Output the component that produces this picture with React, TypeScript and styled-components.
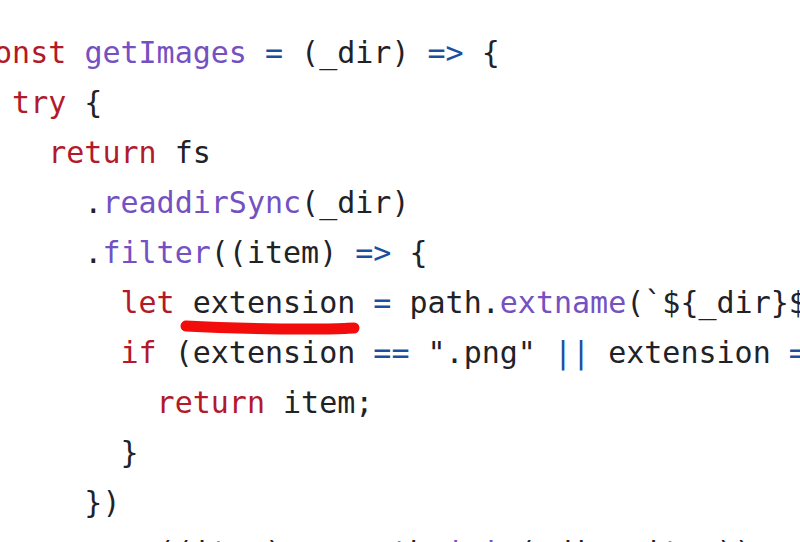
import React from "react";
import styled, { createGlobalStyle } from "styled-components";

const Global = createGlobalStyle`
  html, body { margin: 0; padding: 0; background: #ffffff; }
  body { width: 800px; height: 542px; overflow: hidden; }
`;

const Viewport = styled.div`
  width: 800px;
  height: 542px;
  overflow: hidden;
  background: #ffffff;
`;

const Code = styled.pre`
  margin: 0 0 0 -24px;
  padding: 28px 0 0 0;
  font-family: "DejaVu Sans Mono", "Liberation Mono", monospace;
  font-size: 30px;
  line-height: 50px;
  color: #1f2328;
  white-space: pre;
`;

const Line = styled.div<{ $indent: number }>`
  display: block;
  padding-left: ${(p) => p.$indent * 18.06}px;
  height: 50px;
  white-space: pre;
`;

const Kw = styled.span`
  color: #b21a2b;
`;

const Fn = styled.span`
  color: #7451c2;
`;

const Op = styled.span`
  color: #1d4f9f;
`;

const Marked = styled.span`
  position: relative;
`;

const Scribble = styled.svg`
  position: absolute;
  left: -13px;
  bottom: -15px;
  width: 180px;
  height: 16px;
  overflow: visible;
`;

export default function App() {
  return (
    <Viewport>
      <Global />
      <Code>
        <Line $indent={0}>
          <Kw>const</Kw>{" "}<Fn>getImages</Fn>{" "}<Op>=</Op>{" (_dir) "}<Op>=&gt;</Op>{" {"}
        </Line>
        <Line $indent={2}>
          <Kw>try</Kw>{" {"}
        </Line>
        <Line $indent={4}>
          <Kw>return</Kw>{" fs"}
        </Line>
        <Line $indent={6}>
          {"."}<Fn>readdirSync</Fn>{"(_dir)"}
        </Line>
        <Line $indent={6}>
          {"."}<Fn>filter</Fn>{"((item) "}<Op>=&gt;</Op>{" {"}
        </Line>
        <Line $indent={8}>
          <Kw>let</Kw>{" "}
          <Marked>
            {"extension"}
            <Scribble viewBox="0 0 180 16" aria-hidden="true">
              <path
                d="M6 7 C 40 9, 90 10, 130 10 S 165 9, 174 9"
                fill="none"
                stroke="#f20c0c"
                strokeWidth="11"
                strokeLinecap="round"
              />
            </Scribble>
          </Marked>
          {" "}<Op>=</Op>{" path."}<Fn>extname</Fn>{"(`${_dir}${item}`);"}
        </Line>
        <Line $indent={8}>
          <Kw>if</Kw>{" (extension "}<Op>==</Op>{' ".png" '}<Op>||</Op>{" extension "}<Op>==</Op>{' ".jpg") {'}
        </Line>
        <Line $indent={10}>
          <Kw>return</Kw>{" item;"}
        </Line>
        <Line $indent={8}>{"}"}</Line>
        <Line $indent={6}>{"})"}</Line>
        <Line $indent={6}>
          {"."}<Fn>map</Fn>{"((item) "}<Op>=&gt;</Op>{" path."}<Fn>join</Fn>{"(_dir, item));"}
        </Line>
      </Code>
    </Viewport>
  );
}
